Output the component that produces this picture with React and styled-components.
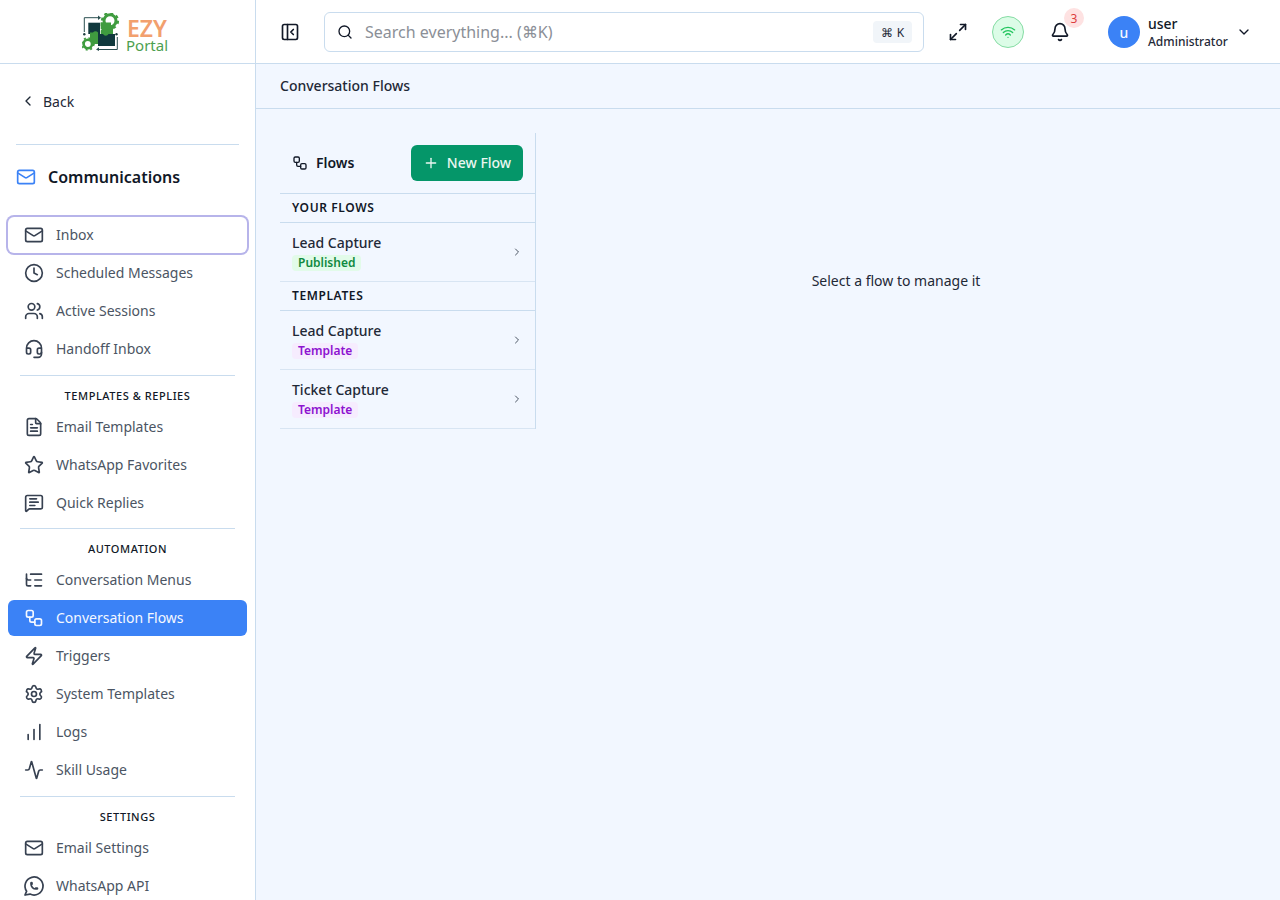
import React from 'react';
import styled, { createGlobalStyle } from 'styled-components';
import {
  Activity, Bell, ChartNoAxesColumnIncreasing, ChevronDown, ChevronLeft, ChevronRight, Clock,
  FileText, Headset, ListTree, Mail, Maximize2, MessageSquareText, PanelLeftClose, Plus, Search,
  Settings, Star, Users, Wifi, Workflow, Zap,
} from 'lucide-react';
import { TbBrandWhatsapp } from 'react-icons/tb';

const GlobalStyle = createGlobalStyle`
  html, body { margin: 0; height: 100%; overflow: hidden; }
  body { font-family: "Noto Sans", "Liberation Sans", sans-serif; color: #111827; background: #fff; }
  * { box-sizing: border-box; }
`;

const Shell = styled.div`
  display: flex;
  width: 1280px;
  height: 900px;
  overflow: hidden;
`;

const Sidebar = styled.aside`
  width: 256px;
  flex-shrink: 0;
  background: #fff;
  border-right: 1px solid #c9dcee;
  display: flex;
  flex-direction: column;
  overflow: hidden;
  & > * { flex-shrink: 0; }
`;

const LogoBar = styled.div`
  height: 64px;
  border-bottom: 1px solid #c9dcee;
  padding-left: 82px;
  display: flex;
  align-items: center;
  gap: 5px;
`;

const LogoWords = styled.div`
  display: flex;
  flex-direction: column;
  margin-top: 7px;
`;

const LogoEzy = styled.span`
  font-size: 23px;
  line-height: 20px;
  font-weight: 600;
  color: #f2a06e;
`;

const LogoPortal = styled.span`
  font-size: 15px;
  line-height: 15px;
  margin-left: -1px;
  color: #4c9f50;
`;

const BackRow = styled.div`
  height: 36px;
  margin: 19px 0 0 16px;
  padding-left: 4px;
  display: flex;
  align-items: center;
  gap: 7px;
  font-size: 14px;
  color: #1f2937;
`;

const TopRule = styled.hr`
  border: 0;
  border-top: 1px solid #c9dcee;
  margin: 25px 16px 0;
`;

const SectionTitle = styled.div`
  height: 64px;
  padding-left: 16px;
  display: flex;
  align-items: center;
  gap: 12px;
  font-size: 16px;
  font-weight: 600;
  color: #111827;
  svg { color: #3b82f6; }
`;

const Nav = styled.nav`
  display: flex;
  flex-direction: column;
  gap: 2px;
  margin-top: 8px;
  padding: 0 8px;
`;

const NavItem = styled.div`
  height: 36px;
  flex-shrink: 0;
  padding: 0 16px;
  border-radius: 6px;
  display: flex;
  align-items: center;
  gap: 12px;
  font-size: 14px;
  line-height: 20px;
  color: ${p => (p.$active ? '#f4f8ff' : '#4b5563')};
  background: ${p => (p.$active ? '#3b82f6' : 'transparent')};
  box-shadow: ${p => (p.$focus ? '0 0 0 2px #b7b4ea' : 'none')};
  svg { color: ${p => (p.$active ? '#f4f8ff' : '#374151')}; flex-shrink: 0; }
`;

const WhatsAppIcon = styled(TbBrandWhatsapp)`
  && {
    width: 24px;
    height: 24px;
    margin: -2px;
    stroke-width: 1.7;
  }
`;

const NavRule = styled.hr`
  border: 0;
  border-top: 1px solid #c9dcee;
  margin: 5.67px 12px 0;
`;

const NavLabel = styled.div`
  height: 23px;
  margin-top: 6px;
  display: flex;
  align-items: center;
  justify-content: center;
  font-size: 11px;
  font-weight: 500;
  letter-spacing: 0.55px;
  text-transform: uppercase;
  color: #111827;
`;

const Column = styled.div`
  flex: 1;
  min-width: 0;
  display: flex;
  flex-direction: column;
`;

const Header = styled.header`
  height: 64px;
  flex-shrink: 0;
  background: #fff;
  border-bottom: 1px solid #c9dcee;
  padding: 1px 16px 0 16px;
  display: flex;
  align-items: center;
`;

const IconButton = styled.div`
  width: 36px;
  height: 36px;
  margin-left: ${p => p.$nudge || 0}px;
  display: flex;
  align-items: center;
  justify-content: center;
  position: relative;
  color: #111827;
  flex-shrink: 0;
`;

const SearchBox = styled.div`
  width: 600px;
  height: 40px;
  margin: 0 16px;
  border: 1px solid #c9dcee;
  border-radius: 6px;
  background: #fff;
  padding: 0 11px 0 12px;
  display: flex;
  align-items: center;
  gap: 12px;
  svg { color: #111827; }
`;

const SearchText = styled.span`
  flex: 1;
  font-size: 16px;
  color: #8b8f97;
`;

const Kbd = styled.span`
  width: 39px;
  height: 22px;
  border-radius: 4px;
  background: #f1f5f9;
  display: flex;
  align-items: center;
  justify-content: center;
  gap: 4px;
  font-size: 12px;
  color: #1f2937;
`;

const HeaderTools = styled.div`
  display: flex;
  align-items: center;
  gap: 16px;
`;

const StatusDot = styled.div`
  width: 32px;
  height: 32px;
  border-radius: 50%;
  background: #dcfce7;
  border: 1px solid #86dca4;
  display: flex;
  align-items: center;
  justify-content: center;
  color: #22c55e;
`;

const Badge = styled.span`
  position: absolute;
  top: -6px;
  right: -6px;
  width: 20px;
  height: 20px;
  border-radius: 50%;
  background: #fee2e2;
  color: #dc3c3c;
  font-size: 12px;
  display: flex;
  align-items: center;
  justify-content: center;
`;

const UserBlock = styled.div`
  display: flex;
  align-items: center;
  margin-left: 30px;
`;

const Avatar = styled.div`
  width: 32px;
  height: 32px;
  border-radius: 50%;
  background: #3b82f6;
  color: #f4f8ff;
  display: flex;
  align-items: center;
  justify-content: center;
  font-size: 14px;
  font-weight: 500;
`;

const UserText = styled.div`
  margin-left: 8px;
  display: flex;
  flex-direction: column;
`;

const UserName = styled.span`
  font-size: 14px;
  font-weight: 500;
  line-height: 18px;
  color: #111827;
`;

const UserRole = styled.span`
  font-size: 12px;
  font-weight: 500;
  line-height: 17px;
  color: #1f2937;
`;

const UserCaret = styled.div`
  margin-left: 8px;
  width: 16px;
  display: flex;
  color: #111827;
`;

const Main = styled.main`
  flex: 1;
  min-height: 0;
  background: #f2f7ff;
  display: flex;
  flex-direction: column;
`;

const Crumb = styled.div`
  height: 45px;
  flex-shrink: 0;
  border-bottom: 1px solid #c9dcee;
  padding: 0 24px 1px;
  display: flex;
  align-items: center;
  font-size: 14px;
  font-weight: 500;
  color: #1f2937;
`;

const Content = styled.div`
  flex: 1;
  min-height: 0;
  padding: 24px;
  display: flex;
  align-items: flex-start;
`;

const FlowPanel = styled.section`
  width: 256px;
  flex-shrink: 0;
  border-right: 1px solid #c9dcee;
`;

const PanelHead = styled.div`
  height: 61px;
  border-bottom: 1px solid #c9dcee;
  padding: 0 12px 1px;
  display: flex;
  align-items: center;
  justify-content: space-between;
`;

const PanelTitle = styled.div`
  display: flex;
  align-items: center;
  gap: 8px;
  font-size: 14px;
  font-weight: 600;
  color: #111827;
`;

const NewButton = styled.div`
  width: 112px;
  height: 36px;
  border-radius: 6px;
  background: #059669;
  color: #eaf7f1;
  font-size: 14px;
  font-weight: 500;
  display: flex;
  align-items: center;
  justify-content: center;
  gap: 8px;
`;

const GroupHead = styled.div`
  height: 29px;
  border-bottom: 1px solid #c9dcee;
  padding: 0 12px 1px;
  display: flex;
  align-items: center;
  font-size: 12px;
  font-weight: 600;
  letter-spacing: 0.6px;
  text-transform: uppercase;
  color: #111827;
`;

const FlowRow = styled.div`
  height: 59px;
  padding: 0 12px;
  border-bottom: 1px solid #d8e5f3;
  display: flex;
  align-items: center;
  justify-content: space-between;
  color: #4b5563;
`;

const FlowInfo = styled.div`
  display: flex;
  flex-direction: column;
  align-items: flex-start;
  gap: 2px;
`;

const FlowName = styled.span`
  font-size: 14px;
  font-weight: 500;
  line-height: 20px;
  color: #1f2937;
`;

const Pill = styled.span`
  font-size: 12px;
  font-weight: 600;
  line-height: 16px;
  padding: 0 6px;
  border-radius: 4px;
  color: ${p => (p.$kind === 'template' ? '#8d12d0' : '#118a3f')};
  background: ${p => (p.$kind === 'template' ? '#f6ecfe' : '#e2fbe9')};
`;

const EmptyState = styled.div`
  flex: 1;
  height: 296px;
  padding-bottom: 2px;
  display: flex;
  align-items: center;
  justify-content: center;
  font-size: 14px;
  color: #1f2937;
`;

const groups = [
  {
    items: [
      { label: 'Inbox', icon: Mail, focus: true },
      { label: 'Scheduled Messages', icon: Clock },
      { label: 'Active Sessions', icon: Users },
      { label: 'Handoff Inbox', icon: Headset },
    ],
  },
  {
    title: 'Templates & Replies',
    items: [
      { label: 'Email Templates', icon: FileText },
      { label: 'WhatsApp Favorites', icon: Star },
      { label: 'Quick Replies', icon: MessageSquareText },
    ],
  },
  {
    title: 'Automation',
    items: [
      { label: 'Conversation Menus', icon: ListTree },
      { label: 'Conversation Flows', icon: Workflow, active: true },
      { label: 'Triggers', icon: Zap },
      { label: 'System Templates', icon: Settings },
      { label: 'Logs', icon: ChartNoAxesColumnIncreasing },
      { label: 'Skill Usage', icon: Activity },
    ],
  },
  {
    title: 'Settings',
    items: [
      { label: 'Email Settings', icon: Mail },
      { label: 'WhatsApp API', icon: WhatsAppIcon },
    ],
  },
];

// puzzle + gears mark, coordinates measured off the reference
function Logo() {
  return (
    <svg width="40" height="38" viewBox="0 0 40 38" fill="none">
      <path d="M2.300 19V4.700H17" stroke="#2b4f50" strokeWidth="1" />
      <path d="M16 2.500 19 4.700 16 6.900z" fill="#2b4f50" />
      <path d="M35.300 24V36.500H15" stroke="#2b4f50" strokeWidth="1" />
      <path d="M17 34.300 14 36.500l3 1.500z" fill="#2b4f50" />
      <circle cx="2.300" cy="21.300" r="1.200" fill="#1f3f40" />
      <circle cx="34.500" cy="21.300" r="1.200" fill="#1f3f40" />
      <path d="M6.300 9.700H18V21H6.300z" fill="#10393d" />
      <path d="M16 21h17v12H16z" fill="#10393d" />
      <path d="M18.700 9.500H31V21h-4.500a3 3 0 0 1-5.500 0h-2.300v-3.500a2.800 2.800 0 0 0 0-4.500z" fill="#3f9c3f" />
      <path d="M8 19.500h3a3 3 0 0 1 5 0v11.500h-3a3 3 0 0 1-5 0z" fill="#3f9c3f" />
      <circle cx="28" cy="7.800" r="6" fill="#fff" stroke="#3f9c3f" strokeWidth="3" />
      <circle cx="28" cy="7.800" r="8" stroke="#3f9c3f" strokeWidth="2.200" strokeDasharray="3 3.300" />
      <path d="M18.700 9.500H29V16H18.700z" fill="#3f9c3f" />
      <circle cx="5.800" cy="31" r="4.200" fill="#fff" stroke="#3f9c3f" strokeWidth="2.600" />
      <circle cx="5.800" cy="31" r="6" stroke="#3f9c3f" strokeWidth="1.600" strokeDasharray="2 2.700" />
    </svg>
  );
}

export default function App() {
  return (
    <>
      <GlobalStyle />
      <Shell>
        <Sidebar>
          <LogoBar>
            <Logo />
            <LogoWords>
              <LogoEzy>EZY</LogoEzy>
              <LogoPortal>Portal</LogoPortal>
            </LogoWords>
          </LogoBar>
          <BackRow><ChevronLeft size={16} />Back</BackRow>
          <TopRule />
          <SectionTitle><Mail size={20} />Communications</SectionTitle>
          <Nav>
            {groups.map((group, i) => (
              <React.Fragment key={i}>
                {group.title && <NavRule />}
                {group.title && <NavLabel>{group.title}</NavLabel>}
                {group.items.map(item => (
                  <NavItem key={item.label} $active={item.active} $focus={item.focus}>
                    <item.icon size={20} />
                    {item.label}
                  </NavItem>
                ))}
              </React.Fragment>
            ))}
          </Nav>
        </Sidebar>
        <Column>
          <Header>
            <IconButton><PanelLeftClose size={20} /></IconButton>
            <SearchBox>
              <Search size={16} />
              <SearchText>Search everything... (⌘K)</SearchText>
              <Kbd><span>⌘</span><span>K</span></Kbd>
            </SearchBox>
            <HeaderTools>
              <IconButton><Maximize2 size={20} /></IconButton>
              <StatusDot><Wifi size={16} /></StatusDot>
              <IconButton $nudge={2}>
                <Bell size={20} />
                <Badge>3</Badge>
              </IconButton>
            </HeaderTools>
            <UserBlock>
              <Avatar>u</Avatar>
              <UserText>
                <UserName>user</UserName>
                <UserRole>Administrator</UserRole>
              </UserText>
              <UserCaret><ChevronDown size={16} /></UserCaret>
            </UserBlock>
          </Header>
          <Main>
            <Crumb>Conversation Flows</Crumb>
            <Content>
              <FlowPanel>
                <PanelHead>
                  <PanelTitle><Workflow size={16} />Flows</PanelTitle>
                  <NewButton><Plus size={16} />New Flow</NewButton>
                </PanelHead>
                <GroupHead>Your Flows</GroupHead>
                <FlowRow>
                  <FlowInfo>
                    <FlowName>Lead Capture</FlowName>
                    <Pill>Published</Pill>
                  </FlowInfo>
                  <ChevronRight size={12} />
                </FlowRow>
                <GroupHead>Templates</GroupHead>
                <FlowRow>
                  <FlowInfo>
                    <FlowName>Lead Capture</FlowName>
                    <Pill $kind="template">Template</Pill>
                  </FlowInfo>
                  <ChevronRight size={12} />
                </FlowRow>
                <FlowRow>
                  <FlowInfo>
                    <FlowName>Ticket Capture</FlowName>
                    <Pill $kind="template">Template</Pill>
                  </FlowInfo>
                  <ChevronRight size={12} />
                </FlowRow>
              </FlowPanel>
              <EmptyState>Select a flow to manage it</EmptyState>
            </Content>
          </Main>
        </Column>
      </Shell>
    </>
  );
}
